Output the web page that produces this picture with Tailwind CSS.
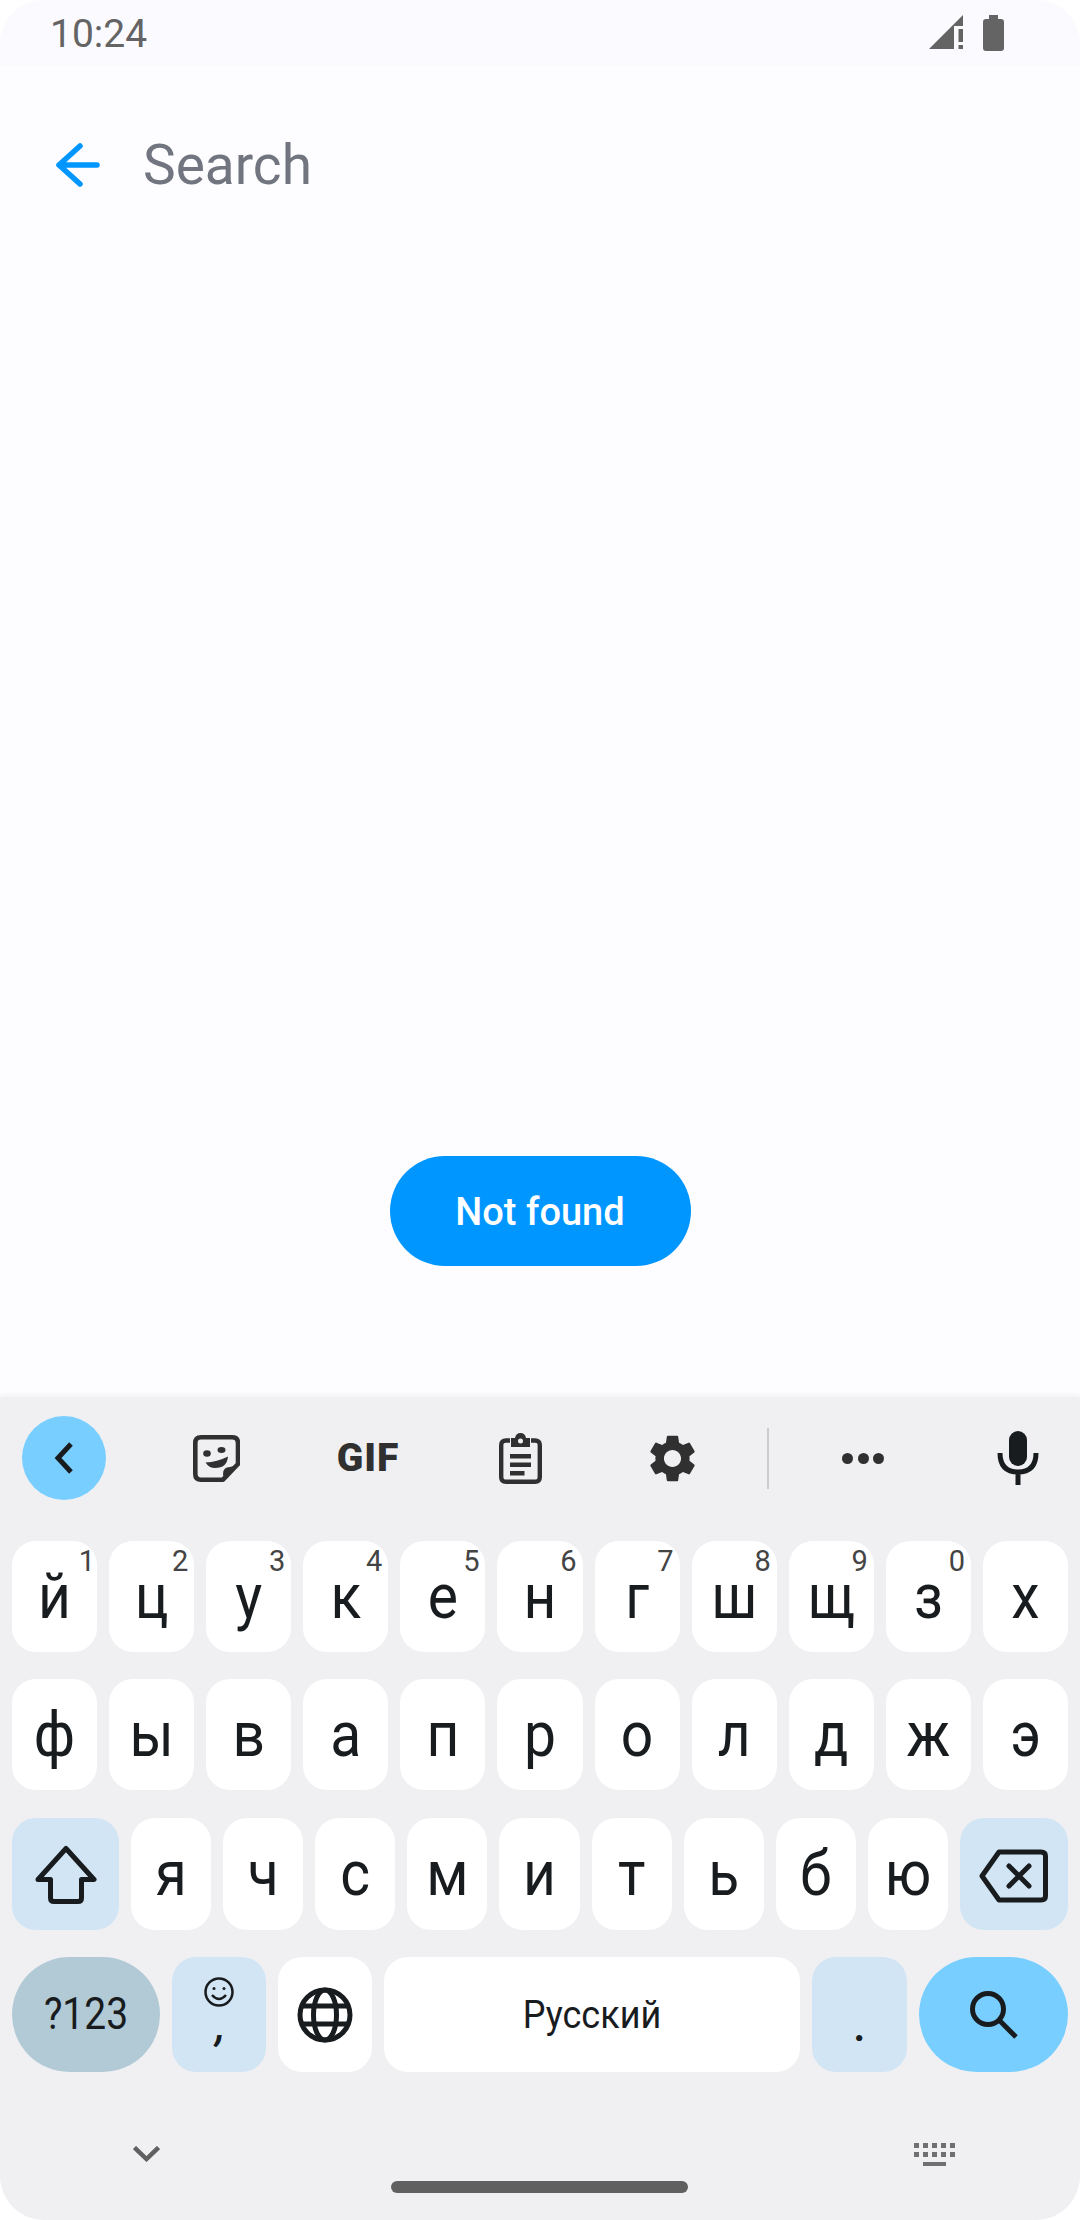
<!DOCTYPE html>
<html lang="ru">

<head>
    <meta charset="UTF-8">
    <meta name="viewport" content="width=device-width, initial-scale=1.0">
    <title>Search</title>
    <script src="https://cdn.jsdelivr.net/npm/@tailwindcss/browser@4"></script>
</head>

<body class="bg-white">
    <div class="w-[1080px] h-[2220px] flex flex-col overflow-hidden rounded-[44px] bg-[#fdfdff] font-['Roboto',sans-serif]">

        <!-- Status bar -->
        <div class="h-[66px] shrink-0 bg-[#fafaff] flex items-start justify-between pl-[50px] pr-[76px] text-[#646464]">
            <span class="text-[39px] leading-[38px] mt-[15px]">10:24</span>
            <div class="flex items-start gap-[20px] mt-[15px]">
                <svg width="34" height="34" viewBox="0 0 34 34" fill="#646464">
                    <path d="M34 0V11H25V34H0Z" />
                    <rect x="29.5" y="14" width="4.5" height="13" />
                    <rect x="29.5" y="30" width="4.5" height="4" />
                </svg>
                <svg width="21" height="36" viewBox="0 0 21 36" fill="#646464">
                    <path d="M6 0H15V4H18Q21 4 21 7V33Q21 36 18 36H3Q0 36 0 33V7Q0 4 3 4H6Z" />
                </svg>
            </div>
        </div>

        <!-- Search header -->
        <div class="flex items-center h-[76px] mt-[61px] pl-[56px] shrink-0">
            <svg width="44" height="44" viewBox="0 0 44 44" fill="none" stroke="#0096ff" stroke-width="5.500" stroke-linecap="round" stroke-linejoin="round">
                <path d="M41 22H3M24 3L3 22L24 41" />
            </svg>
            <span class="ml-[43px] text-[55px] leading-[76px] text-[#70757f]">Search</span>
        </div>

        <!-- Not found pill -->
        <div class="flex-1 flex flex-col items-center justify-end pb-[131px]">
            <div class="w-[301px] h-[110px] pt-[2px] rounded-full bg-[#0096ff] text-white text-[38px] font-medium flex items-center justify-center">Not found</div>
        </div>

        <!-- Keyboard -->
        <div class="h-[823px] shrink-0 bg-[#f0f0f3] shadow-[0_-2px_6px_rgba(0,0,0,0.05)] text-[#191c1f]">

            <!-- Toolbar -->
            <div class="flex items-center h-[84px] mt-[19px] pl-[22px] relative">
                <div class="w-[84px] h-[84px] rounded-full bg-[#78cfff] flex items-center justify-center shrink-0">
                    <svg width="20" height="34" viewBox="0 0 20 34" fill="none" stroke="#191c1f" stroke-width="5">
                        <path d="M17 3L4 17L17 31" />
                    </svg>
                </div>
                <div class="w-[34px] shrink-0"></div>
                <div class="w-[152px] flex justify-center shrink-0">
                    <svg width="47" height="47" viewBox="0 0 47 47" fill="none">
                        <path d="M8 2.3H39Q45 2.3 45 8V29L30 44.7H8Q2.3 44.7 2.3 39V8Q2.3 2.3 8 2.3Z" stroke="#303030" stroke-width="4.6" stroke-linejoin="round" />
                        <path d="M45 30L31 45L30 39Q30 32 37 32Z" fill="#303030" />
                        <ellipse cx="14" cy="18.5" rx="3.8" ry="3.2" fill="#303030" />
                        <ellipse cx="28.5" cy="15" rx="4" ry="3" fill="#303030" />
                        <path d="M12.5 27.5Q24 27 35 21.5Q34 33 22 33Q16 33 12.5 27.5Z" fill="#303030" />
                    </svg>
                </div>
                <div class="w-[152px] flex justify-center shrink-0">
                    <span class="text-[39px] leading-[39px] font-black tracking-[1px] text-[#303030]">GIF</span>
                </div>
                <div class="w-[152px] flex justify-center shrink-0">
                    <svg width="43" height="51" viewBox="0 0 43 51" fill="none">
                        <path d="M11 7.5H7Q2.2 7.5 2.2 12V44Q2.2 48.8 7 48.8H36Q40.8 48.8 40.8 44V12Q40.8 7.5 36 7.5H32" stroke="#303030" stroke-width="4.4" />
                        <path fill-rule="evenodd" d="M12 14V5H16Q17 0 21.5 0Q26 0 27 5H31V14ZM21.5 5.5A2.5 2.5 0 1 0 21.5 10.5A2.5 2.5 0 1 0 21.5 5.5Z" fill="#303030" />
                        <rect x="11" y="21" width="21" height="4.5" fill="#303030" />
                        <rect x="11" y="29.5" width="21" height="4.5" fill="#303030" />
                        <rect x="11" y="38" width="14.5" height="4.5" fill="#303030" />
                    </svg>
                </div>
                <div class="w-[152px] flex justify-center shrink-0">
                    <svg width="57" height="57" viewBox="0 0 24 24" fill="#303030">
                        <path d="M19.14 12.94c.04-.3.06-.61.06-.94 0-.32-.02-.64-.07-.94l2.03-1.58c.18-.14.23-.41.12-.61l-1.92-3.32c-.12-.22-.37-.29-.59-.22l-2.39.96c-.5-.38-1.03-.7-1.62-.94l-.36-2.54c-.04-.24-.24-.41-.48-.41h-3.84c-.24 0-.43.17-.47.41l-.36 2.54c-.59.24-1.13.57-1.62.94l-2.39-.96c-.22-.08-.47 0-.59.22L2.74 8.87c-.12.21-.08.47.12.61l2.03 1.58c-.05.3-.09.63-.09.94s.02.64.07.94l-2.03 1.58c-.18.14-.23.41-.12.61l1.92 3.32c.12.22.37.29.59.22l2.39-.96c.5.38 1.03.7 1.62.94l.36 2.54c.05.24.24.41.48.41h3.84c.24 0 .44-.17.47-.41l.36-2.54c.59-.24 1.13-.56 1.62-.94l2.39.96c.22.08.47 0 .59-.22l1.92-3.32c.12-.22.07-.47-.12-.61l-2.01-1.58zM12 15.6c-1.98 0-3.6-1.62-3.6-3.6s1.62-3.6 3.6-3.6 3.6 1.62 3.6 3.6-1.62 3.6-3.6 3.6z" />
                    </svg>
                </div>
                <div class="w-[2px] h-[61px] bg-[#cccccc] ml-[19px] shrink-0"></div>
                <div class="w-[42px] ml-[73px] flex justify-between shrink-0">
                    <span class="w-[11px] h-[11px] rounded-full bg-[#303030]"></span>
                    <span class="w-[11px] h-[11px] rounded-full bg-[#303030]"></span>
                    <span class="w-[11px] h-[11px] rounded-full bg-[#303030]"></span>
                </div>
                <div class="ml-[113px] shrink-0">
                    <svg width="42" height="54" viewBox="0 0 42 54" fill="none">
                        <rect x="12" y="0" width="18" height="35" rx="9" fill="#191c1f" />
                        <path d="M3 22Q3 41 21 41Q39 41 39 22M21 41V54" stroke="#191c1f" stroke-width="5" />
                    </svg>
                </div>
            </div>

            <!-- Key rows -->
            <div class="mt-[41px] px-3 flex flex-col text-[57px]">
                <div class="flex gap-3 h-[111px]">
                    <div class="relative flex-1 bg-white rounded-[24px] flex items-center justify-center"><span class="scale-y-[1.09]">й</span><span class="absolute top-[6px] right-[2px] text-[29px] leading-[28px] text-[#444444]">1</span></div>
                    <div class="relative flex-1 bg-white rounded-[24px] flex items-center justify-center"><span class="scale-y-[1.09]">ц</span><span class="absolute top-[6px] right-[6px] text-[29px] leading-[28px] text-[#444444]">2</span></div>
                    <div class="relative flex-1 bg-white rounded-[24px] flex items-center justify-center"><span class="scale-y-[1.09]">у</span><span class="absolute top-[6px] right-[6px] text-[29px] leading-[28px] text-[#444444]">3</span></div>
                    <div class="relative flex-1 bg-white rounded-[24px] flex items-center justify-center"><span class="scale-y-[1.09]">к</span><span class="absolute top-[6px] right-[6px] text-[29px] leading-[28px] text-[#444444]">4</span></div>
                    <div class="relative flex-1 bg-white rounded-[24px] flex items-center justify-center"><span class="scale-y-[1.09]">е</span><span class="absolute top-[6px] right-[6px] text-[29px] leading-[28px] text-[#444444]">5</span></div>
                    <div class="relative flex-1 bg-white rounded-[24px] flex items-center justify-center"><span class="scale-y-[1.09]">н</span><span class="absolute top-[6px] right-[6px] text-[29px] leading-[28px] text-[#444444]">6</span></div>
                    <div class="relative flex-1 bg-white rounded-[24px] flex items-center justify-center"><span class="scale-y-[1.09]">г</span><span class="absolute top-[6px] right-[6px] text-[29px] leading-[28px] text-[#444444]">7</span></div>
                    <div class="relative flex-1 bg-white rounded-[24px] flex items-center justify-center"><span class="scale-y-[1.09]">ш</span><span class="absolute top-[6px] right-[6px] text-[29px] leading-[28px] text-[#444444]">8</span></div>
                    <div class="relative flex-1 bg-white rounded-[24px] flex items-center justify-center"><span class="scale-y-[1.09]">щ</span><span class="absolute top-[6px] right-[6px] text-[29px] leading-[28px] text-[#444444]">9</span></div>
                    <div class="relative flex-1 bg-white rounded-[24px] flex items-center justify-center"><span class="scale-y-[1.09]">з</span><span class="absolute top-[6px] right-[6px] text-[29px] leading-[28px] text-[#444444]">0</span></div>
                    <div class="flex-1 bg-white rounded-[24px] flex items-center justify-center"><span class="scale-y-[1.09]">х</span></div>
                </div>
                <div class="flex gap-3 h-[111px] mt-[27px]">
                    <div class="flex-1 bg-white rounded-[24px] flex items-center justify-center"><span class="scale-y-[1.09]">ф</span></div>
                    <div class="flex-1 bg-white rounded-[24px] flex items-center justify-center"><span class="scale-y-[1.09]">ы</span></div>
                    <div class="flex-1 bg-white rounded-[24px] flex items-center justify-center"><span class="scale-y-[1.09]">в</span></div>
                    <div class="flex-1 bg-white rounded-[24px] flex items-center justify-center"><span class="scale-y-[1.09]">а</span></div>
                    <div class="flex-1 bg-white rounded-[24px] flex items-center justify-center"><span class="scale-y-[1.09]">п</span></div>
                    <div class="flex-1 bg-white rounded-[24px] flex items-center justify-center"><span class="scale-y-[1.09]">р</span></div>
                    <div class="flex-1 bg-white rounded-[24px] flex items-center justify-center"><span class="scale-y-[1.09]">о</span></div>
                    <div class="flex-1 bg-white rounded-[24px] flex items-center justify-center"><span class="scale-y-[1.09]">л</span></div>
                    <div class="flex-1 bg-white rounded-[24px] flex items-center justify-center"><span class="scale-y-[1.09]">д</span></div>
                    <div class="flex-1 bg-white rounded-[24px] flex items-center justify-center"><span class="scale-y-[1.09]">ж</span></div>
                    <div class="flex-1 bg-white rounded-[24px] flex items-center justify-center"><span class="scale-y-[1.09]">э</span></div>
                </div>
                <div class="flex gap-3 h-[112px] mt-[28px]">
                    <div class="w-[107px] shrink-0 bg-[#d2e5f4] rounded-[24px] flex items-center justify-center">
                        <svg width="62" height="59" viewBox="0 0 62 59" fill="none" stroke="#191c1f" stroke-width="5" stroke-linejoin="round">
                            <path d="M31 3.500L59 34.500H46.500V53Q46.500 56.500 43 56.500H19Q15.500 56.500 15.500 53V34.500H3Z" />
                        </svg>
                    </div>
                    <div class="flex-1 bg-white rounded-[24px] flex items-center justify-center"><span class="scale-y-[1.09]">я</span></div>
                    <div class="flex-1 bg-white rounded-[24px] flex items-center justify-center"><span class="scale-y-[1.09]">ч</span></div>
                    <div class="flex-1 bg-white rounded-[24px] flex items-center justify-center"><span class="scale-y-[1.09]">с</span></div>
                    <div class="flex-1 bg-white rounded-[24px] flex items-center justify-center"><span class="scale-y-[1.09]">м</span></div>
                    <div class="flex-1 bg-white rounded-[24px] flex items-center justify-center"><span class="scale-y-[1.09]">и</span></div>
                    <div class="flex-1 bg-white rounded-[24px] flex items-center justify-center"><span class="scale-y-[1.09]">т</span></div>
                    <div class="flex-1 bg-white rounded-[24px] flex items-center justify-center"><span class="scale-y-[1.09]">ь</span></div>
                    <div class="flex-1 bg-white rounded-[24px] flex items-center justify-center"><span class="scale-y-[1.09]">б</span></div>
                    <div class="flex-1 bg-white rounded-[24px] flex items-center justify-center"><span class="scale-y-[1.09]">ю</span></div>
                    <div class="w-[108px] shrink-0 bg-[#d2e5f4] rounded-[24px] flex items-center justify-center">
                        <svg class="mt-[3px]" width="69" height="54" viewBox="0 0 69 54" fill="none" stroke="#191c1f" stroke-width="5" stroke-linejoin="round" stroke-linecap="round">
                            <path d="M20 3H62Q66.500 3 66.500 7V47Q66.500 51 62 51H20L3 27Z" />
                            <path d="M30 17L50 37M50 17L30 37" />
                        </svg>
                    </div>
                </div>
                <div class="flex gap-3 h-[115px] mt-[27px]">
                    <div class="w-[148px] shrink-0 bg-[#b2c9d6] rounded-full flex items-center justify-center text-[39px]"><span class="scale-y-[1.14]">?123</span></div>
                    <div class="w-[94px] shrink-0 bg-[#d2e5f4] rounded-[24px] flex flex-col items-center">
                        <svg class="mt-[20px]" width="30" height="30" viewBox="0 0 30 30" fill="none" stroke="#191c1f" stroke-width="2.500">
                            <circle cx="15" cy="15" r="13.500" />
                            <path d="M8 18Q15 26 22 18" />
                            <circle cx="10" cy="11.500" r="1.500" fill="#191c1f" stroke="none" />
                            <circle cx="20" cy="11.500" r="1.500" fill="#191c1f" stroke="none" />
                        </svg>
                        <span class="text-[44px] leading-[44px] mt-[-4px] ml-[3px] font-medium italic">,</span>
                    </div>
                    <div class="w-[94px] shrink-0 bg-white rounded-[24px] flex items-center justify-center">
                        <svg width="56" height="56" viewBox="0 0 56 56" fill="none" stroke="#191c1f" stroke-width="5">
                            <circle cx="28" cy="28" r="25" />
                            <ellipse cx="28" cy="28" rx="11.500" ry="25" />
                            <path d="M4 19H52M4 37H52" />
                        </svg>
                    </div>
                    <div class="w-[416px] shrink-0 bg-white rounded-[24px] flex items-center justify-center text-[36px]"><span class="scale-y-[1.1]">Русский</span></div>
                    <div class="w-[95px] shrink-0 bg-[#d2e5f4] rounded-[24px] flex justify-center">
                        <span class="text-[46px] leading-[44px] mt-[46px] font-medium">.</span>
                    </div>
                    <div class="w-[149px] shrink-0 bg-[#78cfff] rounded-full flex items-center justify-center">
                        <svg width="48" height="48" viewBox="0 0 48 48" fill="none" stroke="#191c1f" stroke-width="5">
                            <circle cx="18" cy="18" r="15.500" />
                            <path d="M29 29L46 46" />
                        </svg>
                    </div>
                </div>
            </div>

            <!-- Navigation row -->
            <div class="mt-[71px] pl-[133px] pr-[125px] flex items-start justify-between">
                <svg class="mt-[3px]" width="27" height="16" viewBox="0 0 27 16" fill="none" stroke="#606060" stroke-width="4.500">
                    <path d="M1.500 1.500L13.500 13L25.500 1.500" />
                </svg>
                <svg width="41" height="23" viewBox="0 0 41 23" fill="#707070">
                    <rect x="0" y="0" width="5" height="5" /><rect x="9" y="0" width="5" height="5" /><rect x="18" y="0" width="5" height="5" /><rect x="27" y="0" width="5" height="5" /><rect x="36" y="0" width="5" height="5" />
                    <rect x="0" y="9" width="5" height="5" /><rect x="9" y="9" width="5" height="5" /><rect x="18" y="9" width="5" height="5" /><rect x="27" y="9" width="5" height="5" /><rect x="36" y="9" width="5" height="5" />
                    <rect x="9" y="19" width="23" height="4" />
                </svg>
            </div>
            <div class="w-[297px] h-[12px] rounded-full bg-[#606060] ml-[391px] mt-[15px]"></div>
        </div>
    </div>
</body>

</html>
